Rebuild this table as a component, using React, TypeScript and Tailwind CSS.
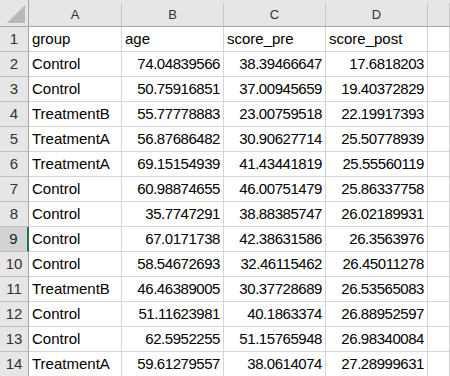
import React from 'react';

const rows: string[][] = [
    ['group', 'age', 'score_pre', 'score_post'],
    ['Control', '74.04839566', '38.39466647', '17.6818203'],
    ['Control', '50.75916851', '37.00945659', '19.40372829'],
    ['TreatmentB', '55.77778883', '23.00759518', '22.19917393'],
    ['TreatmentA', '56.87686482', '30.90627714', '25.50778939'],
    ['TreatmentA', '69.15154939', '41.43441819', '25.55560119'],
    ['Control', '60.98874655', '46.00751479', '25.86337758'],
    ['Control', '35.7747291', '38.88385747', '26.02189931'],
    ['Control', '67.0171738', '42.38631586', '26.3563976'],
    ['Control', '58.54672693', '32.46115462', '26.45011278'],
    ['TreatmentB', '46.46389005', '30.37728689', '26.53565083'],
    ['Control', '51.11623981', '40.1863374', '26.88952597'],
    ['Control', '62.5952255', '51.15765948', '26.98340084'],
    ['TreatmentA', '59.61279557', '38.0614074', '27.28999631'],
];

const cols = ['A', 'B', 'C', 'D', ''];
const gridCols = 'grid grid-cols-[29px_93px_102px_102px_102px_1fr]';

export default function App() {
    return (
        <div className="w-[450px] h-[376px] overflow-hidden bg-white text-black" style={{ fontFamily: '"Liberation Sans", Arial, sans-serif' }}>
            {/* column headers */}
            <div className={`${gridCols} h-[27px] bg-[#e6e6e6] border-b border-[#a6a6a6]`}>
                <div className="relative border-r border-[#a6a6a6]">
                    <div
                        className="absolute right-[3px] bottom-[3px] w-[18px] h-[18px] bg-[#b8b8b8]"
                        style={{ clipPath: 'polygon(100% 0, 100% 100%, 0 100%)' }}
                    />
                </div>
                {cols.map((c, i) => (
                    <div key={i} className="pt-[3px]">
                        <div className="h-[23px] leading-[23px] text-center text-[13px] text-[#333] border-r border-[#c6c6c6]">
                            {c}
                        </div>
                    </div>
                ))}
            </div>

            {/* body */}
            {rows.map((r, ri) => {
                const active = ri === 8;
                return (
                    <div key={ri} className={`${gridCols} h-[25px] text-[15px] leading-[24px]`}>
                        <div
                            className={
                                active
                                    ? 'bg-[#d2d2d2] text-center text-[#222] border-b border-[#bdbdbd] border-r-2 border-r-[#217346]'
                                    : 'bg-[#e6e6e6] text-center text-[#333] border-b border-[#bdbdbd] border-r border-r-[#a6a6a6]'
                            }
                        >
                            {ri + 1}
                        </div>
                        {r.map((v, ci) => {
                            const numeric = ri > 0 && ci > 0;
                            return (
                                <div
                                    key={ci}
                                    className={
                                        numeric
                                            ? 'px-[3px] text-right tracking-[-0.45px] whitespace-nowrap overflow-hidden border-r border-b border-[#d4d4d4]'
                                            : 'px-[3px] text-left whitespace-nowrap overflow-hidden border-r border-b border-[#d4d4d4]'
                                    }
                                >
                                    {v}
                                </div>
                            );
                        })}
                        <div className="border-r border-b border-[#d4d4d4]" />
                    </div>
                );
            })}
        </div>
    );
}
